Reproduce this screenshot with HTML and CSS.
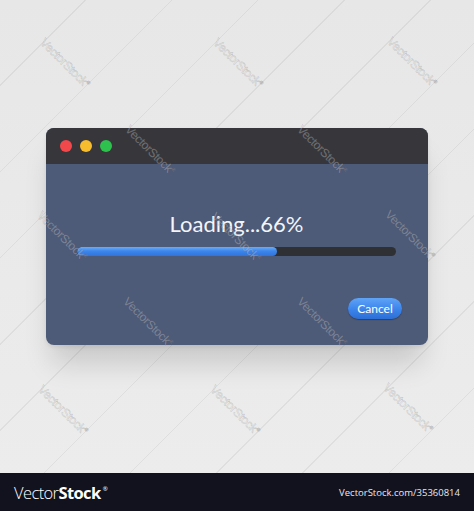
FILE: index.html
```html
<!DOCTYPE html>
<html lang="en">
<head>
  <meta charset="UTF-8" />
  <meta name="viewport" content="width=device-width, initial-scale=1.0"/>
  <title>Loading Window</title>
  <link rel="stylesheet" href="styles.css">
</head>
<body>

  <div class="stage">
    <!-- App window -->
    <div class="window">
      <div class="titlebar">
        <span class="dot red"></span>
        <span class="dot yellow"></span>
        <span class="dot green"></span>
      </div>
      <div class="content">
        <h1 class="status">Loading...66%</h1>
        <div class="progress">
          <div class="progress-fill" style="width: 62.7%"></div>
        </div>
        <div class="actions">
          <button class="cancel-btn">Cancel</button>
        </div>
      </div>
    </div>

    <!-- Watermark layer -->
    <div class="marks">
      <span class="mark" style="left: 65px; top: 63px">VectorStock<sup>®</sup></span>
      <span class="mark" style="left: 238px; top: 63px">VectorStock<sup>®</sup></span>
      <span class="mark" style="left: 412px; top: 62px">VectorStock<sup>®</sup></span>
      <span class="mark" style="left: 150px; top: 150px">VectorStock<sup>®</sup></span>
      <span class="mark" style="left: 322px; top: 150px">VectorStock<sup>®</sup></span>
      <span class="mark" style="left: 62px; top: 236px">VectorStock<sup>®</sup></span>
      <span class="mark" style="left: 236px; top: 237px">VectorStock<sup>®</sup></span>
      <span class="mark" style="left: 410px; top: 235px">VectorStock<sup>®</sup></span>
      <span class="mark" style="left: 148px; top: 322px">VectorStock<sup>®</sup></span>
      <span class="mark" style="left: 322px; top: 322px">VectorStock<sup>®</sup></span>
      <span class="mark" style="left: 63px; top: 410px">VectorStock<sup>®</sup></span>
      <span class="mark" style="left: 235px; top: 410px">VectorStock<sup>®</sup></span>
      <span class="mark" style="left: 408px; top: 408px">VectorStock<sup>®</sup></span>
    </div>
  </div>

  <footer class="footer">
    <div class="brand"><span class="brand-light">Vector</span><span class="brand-bold">Stock</span><sup>®</sup></div>
    <div class="ref">VectorStock.com/35360814</div>
  </footer>

</body>
</html>
```

FILE: styles.css
```css
body {
  margin: 0;
  font-family: 'Lato', 'Open Sans', sans-serif;
  background: #e6e6e6;
  width: 474px;
  height: 511px;
  overflow: hidden;
}
.stage {
  position: relative;
  height: 473px;
  display: flex;
  align-items: center;
  justify-content: center;
  background:
    repeating-linear-gradient(135deg, transparent 0, transparent 60px, rgba(0,0,0,0.055) 60px, rgba(0,0,0,0.055) 61px),
    linear-gradient(180deg, #e7e7e7, #ececec);
  overflow: hidden;
}
.window {
  width: 382px;
  height: 217px;
  border-radius: 8px;
  overflow: hidden;
  display: flex;
  flex-direction: column;
  background: #4d5a78;
  box-shadow: 0 24px 28px -6px rgba(0,0,0,0.15), 0 2px 4px rgba(0,0,0,0.08);
}
.titlebar {
  height: 36px;
  background: #37373b;
  display: flex;
  align-items: center;
  gap: 8px;
  padding: 0 14px;
}
.dot {
  width: 12px;
  height: 12px;
  border-radius: 50%;
}
.red { background: #f2484c; }
.yellow { background: #f8bc2f; }
.green { background: #2fc14e; }
.content {
  flex: 1;
  display: flex;
  flex-direction: column;
  padding: 0 32px 26px 31px;
}
.status {
  margin: 47px 0 0;
  font-weight: 400;
  font-size: 22px;
  line-height: 26px;
  color: #f4f5f8;
  text-align: center;
}
.progress {
  margin-top: 10px;
  height: 9px;
  border-radius: 5px;
  background: #2f3034;
  overflow: hidden;
}
.progress-fill {
  height: 100%;
  border-radius: 5px;
  background: linear-gradient(180deg, #6aacf8, #3d86ec 45%, #2f74da);
}
.actions {
  margin-top: auto;
  display: flex;
  justify-content: flex-end;
}
.cancel-btn {
  width: 54px;
  height: 21px;
  margin-right: -6px;
  border: none;
  border-radius: 11px;
  background: linear-gradient(180deg, #5fa4f6, #3b84ea 55%, #2c6fd6);
  box-shadow: 0 1px 1px rgba(0,0,0,0.3);
  color: #fff;
  font-family: 'Lato', 'Open Sans', sans-serif;
  font-size: 12px;
  padding: 0;
  cursor: pointer;
}
.marks {
  position: absolute;
  inset: 0;
  pointer-events: none;
}
.mark {
  position: absolute;
  transform: translate(-50%, -50%) rotate(45deg);
  font-family: 'Liberation Sans', sans-serif;
  font-size: 12px;
  letter-spacing: -0.3px;
  white-space: nowrap;
  color: rgba(255,255,255,0.3);
  -webkit-text-stroke: 0.5px rgba(90,90,90,0.28);
}
.mark sup {
  font-size: 5px;
}
.footer {
  height: 38px;
  background: #12121f;
  display: flex;
  align-items: center;
  justify-content: space-between;
  padding: 0 14px;
  color: #fff;
}
.brand {
  font-family: 'Open Sans', sans-serif;
  font-size: 16.5px;
  letter-spacing: -0.6px;
}
.brand-light { font-weight: 300; }
.brand-bold { font-weight: 700; }
.brand sup {
  font-size: 6px;
  vertical-align: 8px;
  margin-left: 2px;
}
.ref {
  font-family: 'Open Sans', sans-serif;
  font-size: 9.5px;
  color: #e8e8ee;
}
```
